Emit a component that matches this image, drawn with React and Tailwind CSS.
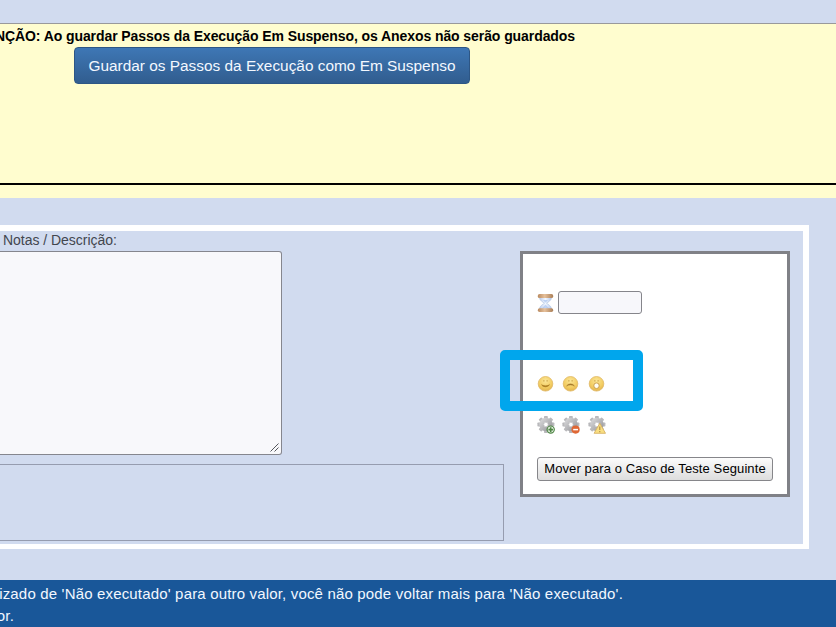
import React from 'react';

function Hourglass() {
  return (
    <svg width="17" height="20" viewBox="0 0 17 20" className="shrink-0">
      <defs>
        <linearGradient id="wood" x1="0" x2="1">
          <stop offset="0" stopColor="#b98a60" />
          <stop offset=".45" stopColor="#e6c09a" />
          <stop offset="1" stopColor="#a97e57" />
        </linearGradient>
        <linearGradient id="glass" x1="0" x2="1">
          <stop offset="0" stopColor="#b9cbed" />
          <stop offset=".5" stopColor="#f3f8ff" />
          <stop offset="1" stopColor="#b3c6ea" />
        </linearGradient>
      </defs>
      <path d="M2.500 4.500h12c0 3-3.500 4.600-5 5.700 1.500 1.200 5 2.700 5 5.700h-12c0-3 3.500-4.500 5-5.700-1.500-1.100-5-2.700-5-5.700z" fill="url(#glass)" stroke="#b2c5e4" strokeWidth=".7" />
      <path d="M6 7h5L8.500 9.800zM8.500 11.500l3.500 3.800H5z" fill="#9dbaec" opacity=".6" />
      <rect x=".8" y="1.100" width="15.400" height="4" rx="1.700" fill="url(#wood)" />
      <rect x=".8" y="15.300" width="15.400" height="3.700" rx="1.700" fill="url(#wood)" />
    </svg>
  );
}

function Face({ mood }) {
  return (
    <svg width="17" height="17" viewBox="0 0 17 17">
      <defs>
        <radialGradient id="face" cx=".5" cy=".3" r=".75">
          <stop offset="0" stopColor="#fbe596" />
          <stop offset=".6" stopColor="#f3cd62" />
          <stop offset="1" stopColor="#dfae4a" />
        </radialGradient>
      </defs>
      <circle cx="8.500" cy="8.800" r="7.300" fill="url(#face)" stroke="#dfb765" strokeWidth=".8" />
      <path d="M6.900 5.200v1.300M10.100 5.200v1.300" stroke="#c2983c" strokeWidth="1" />
      {mood === 'happy' && <path d="M4 8.800c1.800 2.200 7.300 2.200 9 0-.6 4.300-7.800 5-9 0z" fill="#b08227" />}
      {mood === 'sad' && <path d="M4.500 11.300c1.200-3.300 6.800-3.300 8 0-2.500-1.600-5.500-1.600-8 0z" fill="#a67b2c" stroke="#a67b2c" strokeWidth=".3" />}
      {mood === 'shocked' && <rect x="5.900" y="8" width="5.200" height="5.400" rx="2.300" fill="#fffdf3" stroke="#c79a44" strokeWidth=".9" />}
    </svg>
  );
}

const TEETH = [0, 45, 90, 135, 180, 225, 270, 315];

function Gear({ badge }) {
  return (
    <svg width="18" height="18" viewBox="0 0 18 18">
      <defs>
        <linearGradient id="metal" x1="0" y1="0" x2="1" y2="1">
          <stop offset="0" stopColor="#d2d2d4" />
          <stop offset="1" stopColor="#9c9ca0" />
        </linearGradient>
      </defs>
      {TEETH.map((a) => (
        <rect key={a} x="7" y="0" width="3.800" height="4" rx=".7" fill="#b9b9bc" transform={`rotate(${a} 8.900 8.500)`} />
      ))}
      <circle cx="8.900" cy="8.500" r="4.500" fill="none" stroke="url(#metal)" strokeWidth="4.400" />
      <circle cx="8.900" cy="8.500" r="2.200" fill="#fff" stroke="#a8a8ac" strokeWidth=".5" />
      {badge === 'add' && (
        <g>
          <circle cx="13.700" cy="13.600" r="3.600" fill="#e9f3e5" stroke="#4f8646" strokeWidth="1.200" />
          <path d="M13.700 11.300v4.600M11.400 13.600H16" stroke="#4f8646" strokeWidth="1.600" />
        </g>
      )}
      {badge === 'remove' && (
        <g>
          <circle cx="13.600" cy="13.600" r="4.100" fill="#df6735" />
          <path d="M11.200 13.600H16" stroke="#fff" strokeWidth="1.500" />
        </g>
      )}
      {badge === 'warn' && (
        <g>
          <path d="M11.800 7.300l5.700 10H6.100z" fill="#f9df82" stroke="#d8b264" strokeWidth=".9" strokeLinejoin="round" />
          <path d="M11.800 10.500v3.600M11.800 15v1.200" stroke="#b08b40" strokeWidth="1.100" />
        </g>
      )}
    </svg>
  );
}

function SuspendBanner() {
  return (
    <section className="h-[175px] shrink-0 border-t border-[#99999b] bg-[#fffdcf]">
      <div className="flex h-[159px] flex-col">
        <div className="flex h-[23px] w-[575px] items-center justify-end whitespace-nowrap pt-[2px] text-[14px] font-bold tracking-[-0.08px] text-black">
          NÇÃO: Ao guardar Passos da Execução Em Suspenso, os Anexos não serão guardados
        </div>
        <button className="ml-[74px] flex h-[37px] w-[396px] items-center justify-center whitespace-nowrap rounded-[4px] border border-[#2d5685] bg-linear-to-b from-[#3e77b5] to-[#315d8f] text-[15.400px] text-[#f3f8ff]">
          Guardar os Passos da Execução como Em Suspenso
        </button>
      </div>
      <div className="h-[2px] bg-black" />
    </section>
  );
}

function ResultPanel() {
  return (
    <aside className="relative h-[246px] w-[270px] border-[3px] border-[#808187] bg-white pl-[14px] pt-[37px]">
      <div className="flex h-[23px] items-center gap-[4px]">
        <Hourglass />
        <input className="h-[23px] w-[84px] rounded-[3px] border border-[#85858b] bg-[#f7f7fb]" />
      </div>
      <div className="mt-[61px] flex gap-[8.300px]">
        <Face mood="happy" />
        <Face mood="sad" />
        <Face mood="shocked" />
      </div>
      <div className="mt-[23.500px] flex gap-[7.300px]">
        <Gear badge="add" />
        <Gear badge="remove" />
        <Gear badge="warn" />
      </div>
      <button className="mt-[23.500px] flex h-[24px] w-[236px] items-center justify-center whitespace-nowrap rounded-[3px] border border-[#86868a] bg-linear-to-b from-[#fcfcfc] to-[#dddddd] text-[13px] tracking-[0.1px] text-black">
        Mover para o Caso de Teste Seguinte
      </button>
      <div className="absolute left-[-23px] top-[96px] h-[61px] w-[143px] rounded-[5px] border-[10px] border-[#00a6ed]" />
    </aside>
  );
}

export default function App() {
  return (
    <main className="flex h-[627px] w-[836px] flex-col overflow-hidden bg-[#d1dbef] font-['Liberation_Sans',Arial,sans-serif]">
      <div className="h-[23px] shrink-0" />
      <SuspendBanner />
      <section className="mt-[27px] flex h-[324px] w-[809px] shrink-0 border-b-[5px] border-r-[6px] border-t-[6px] border-white">
        <div className="flex w-[520px] flex-col">
          <label className="flex h-[20px] items-center whitespace-nowrap pb-[2px] pl-[3px] text-[14px] tracking-[-0.03px] text-[#42464e]">Notas / Descrição:</label>
          <div className="flex h-[204px] w-[282px] items-end justify-end rounded-r-[3px] border-y border-r border-[#85868e] bg-[#f8f8fb] p-[2px]">
            <svg width="9" height="9" viewBox="0 0 9 9" stroke="#55575c" strokeWidth="1" fill="none">
              <path d="M.5 8.500l8-8M4.500 8.500l4-4" />
            </svg>
          </div>
          <div className="mt-[9px] h-[77px] w-[504px] border-y border-r border-[#969caf]" />
        </div>
        <div className="pt-[20px]">
          <ResultPanel />
        </div>
      </section>
      <footer className="mt-[31px] h-[47px] shrink-0 bg-[#195799] pt-[3px] text-[15px] leading-[22px] tracking-[0.170px] text-[#f2f7ff]">
        <div className="flex w-[623px] justify-end whitespace-nowrap">izado de 'Não executado' para outro valor, você não pode voltar mais para 'Não executado'.</div>
        <div className="flex w-[14px] justify-end whitespace-nowrap">or.</div>
      </footer>
    </main>
  );
}
